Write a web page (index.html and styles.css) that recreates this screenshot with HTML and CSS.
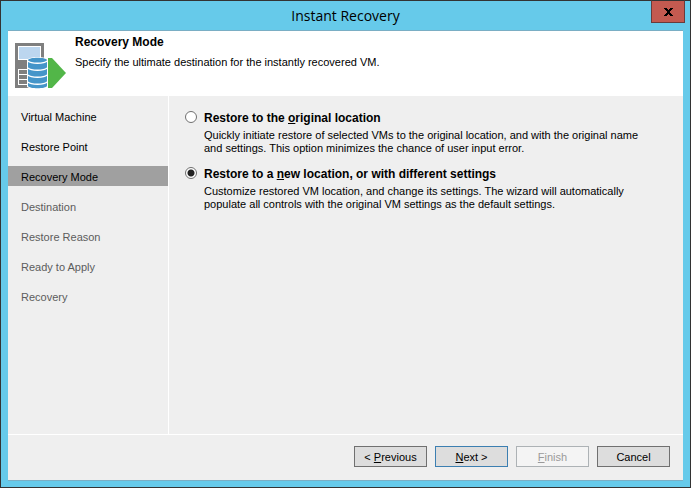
FILE: index.html
```html
<!DOCTYPE html>
<html lang="en">
<head>
  <meta charset="UTF-8" />
  <meta name="viewport" content="width=device-width, initial-scale=1" />
  <title>Instant Recovery</title>
  <link rel="stylesheet" href="styles.css">
</head>
<body>

  <div class="window">
    <div class="titlebar">
      <h1>Instant Recovery</h1>
      <button type="button" class="close" aria-label="Close">
        <svg width="9" height="8" viewBox="0 0 9 8" shape-rendering="crispEdges">
          <path d="M0 0h3v1h1v1h1V1h1V0h3v1H8v1H7v1H6v2h1v1h1v1h1v1H6V7H5V6H4v1H3v1H0V7h1V6h1V5h1V3H2V2H1V1H0z" fill="#000" />
        </svg>
      </button>
    </div>

    <form class="wizard">
      <header class="header">
        <svg class="header-icon" width="52" height="46" viewBox="0 0 52 46">
          <!-- server -->
          <rect x="0" y="0" width="29" height="45" fill="#7f7f7f" />
          <rect x="3" y="3" width="23" height="14" fill="#fff" />
          <rect x="4" y="4" width="21" height="12" fill="#bcd6ef" />
          <rect x="3" y="26" width="14" height="16" fill="#fff" />
          <path d="M4 27h12v4H4zM4 32h12v4H4zM4 37h12v4H4z" fill="#7f7f7f" />
          <!-- database -->
          <path d="M12 17c2-4 20-4 21 0v28H14l-2-1z" fill="#fff" />
          <path d="M13 17c1-3 18-3 19 0v26c-1 3-18 3-19 0z" fill="#4595c9" />
          <path d="M13 18c3 3 16 3 19 0M13 25c3 3 16 3 19 0M13 32c3 3 16 3 19 0M13 39c3 3 16 3 19 0" fill="none" stroke="#fff" stroke-width="1.5" />
          <!-- arrow -->
          <path d="M33 15h4l14 15-14 15h-4z" fill="#52b648" />
        </svg>
        <div class="header-text">
          <h2>Recovery Mode</h2>
          <p>Specify the ultimate destination for the instantly recovered VM.</p>
        </div>
      </header>

      <div class="main">
        <ul class="steps">
          <li>Virtual Machine</li>
          <li>Restore Point</li>
          <li class="active">Recovery Mode</li>
          <li class="pending">Destination</li>
          <li class="pending">Restore Reason</li>
          <li class="pending">Ready to Apply</li>
          <li class="pending">Recovery</li>
        </ul>

        <div class="options">
          <div class="option">
            <input type="radio" name="mode" id="mode-original" />
            <label for="mode-original">Restore to the <u>o</u>riginal location</label>
            <p>Quickly initiate restore of selected VMs to the original location, and with the original name<br>and settings. This option minimizes the chance of user input error.</p>
          </div>
          <div class="option">
            <input type="radio" name="mode" id="mode-new" checked />
            <label for="mode-new">Restore to a <u>n</u>ew location, or with different settings</label>
            <p>Customize restored VM location, and change its settings. The wizard will automatically<br>populate all controls with the original VM settings as the default settings.</p>
          </div>
        </div>
      </div>

      <div class="footer">
        <button type="button">&lt; <u>P</u>revious</button>
        <button type="button" class="default"><u>N</u>ext &gt;</button>
        <button type="button" disabled><u>F</u>inish</button>
        <button type="button">Cancel</button>
      </div>
    </form>
  </div>

</body>
</html>
```
FILE: styles.css
```css
* {
  box-sizing: border-box;
}
body {
  margin: 0;
  font-family: "Liberation Sans", Arial, sans-serif;
  font-size: 11px;
  color: #000;
}
h1, h2, p, ul {
  margin: 0;
  padding: 0;
}
.window {
  display: flex;
  flex-direction: column;
  min-height: 100vh;
  padding: 0 7px 6px;
  background: #66caea;
  border: 1px solid #333;
}
.titlebar {
  position: relative;
  height: 29px;
}
.titlebar h1 {
  font-family: "Open Sans", sans-serif;
  font-size: 14px;
  font-weight: normal;
  line-height: 29px;
  text-align: center;
}
.close {
  position: absolute;
  top: -1px;
  right: -2px;
  display: flex;
  align-items: center;
  justify-content: center;
  width: 34px;
  height: 23px;
  padding: 0;
  background: #c35a50;
  border: 1px solid #693b3b;
  border-top-color: #333;
}
.wizard {
  display: flex;
  flex: 1;
  flex-direction: column;
  background: #efefef;
  border-top: 1px solid #7aaec4;
  border-bottom: 1px solid #7aaec4;
}
.header {
  display: flex;
  gap: 8px;
  height: 65px;
  padding: 4px 7px;
  background: #fff;
}
.header-icon {
  margin-top: 8px;
}
.header-text h2 {
  font-size: 12px;
  line-height: 14px;
}
.header-text p {
  margin-top: 6px;
  line-height: 14px;
}
.main {
  display: flex;
  flex: 1;
}
.steps {
  width: 161px;
  padding-top: 10px;
  border-right: 1px solid #fff;
  list-style: none;
}
.steps li {
  height: 20px;
  margin-bottom: 10px;
  padding-left: 13px;
  line-height: 22px;
}
.steps .active {
  background: #a0a0a0;
}
.steps .pending {
  color: #5c5c5c;
}
.options {
  flex: 1;
  padding: 15px 16px;
}
.option {
  display: grid;
  grid-template-columns: 12px 1fr;
  column-gap: 7px;
  margin-bottom: 12px;
}
.option input {
  appearance: none;
  width: 12px;
  height: 12px;
  margin: 0;
  background: #fff;
  border: 1px solid #707070;
  border-radius: 50%;
}
.option input:checked {
  background: radial-gradient(circle, #222 3px, #fff 4px);
}
.option label {
  font-size: 12px;
  font-weight: bold;
  line-height: 14px;
}
.option p {
  grid-column: 2;
  margin-top: 4px;
  line-height: 13px;
}
.footer {
  display: flex;
  justify-content: flex-end;
  gap: 8px;
  padding: 11px 13px 13px;
  border-top: 1px solid #fff;
}
.footer button {
  width: 73px;
  height: 21px;
  padding: 0;
  font: inherit;
  color: #000;
  background: #ddd;
  border: 1px solid #707070;
}
.footer .default {
  border-color: #3c7fb1;
}
.footer button:disabled {
  color: #9a9a9a;
  background: #f4f4f4;
  border-color: #adb2b5;
}
```
